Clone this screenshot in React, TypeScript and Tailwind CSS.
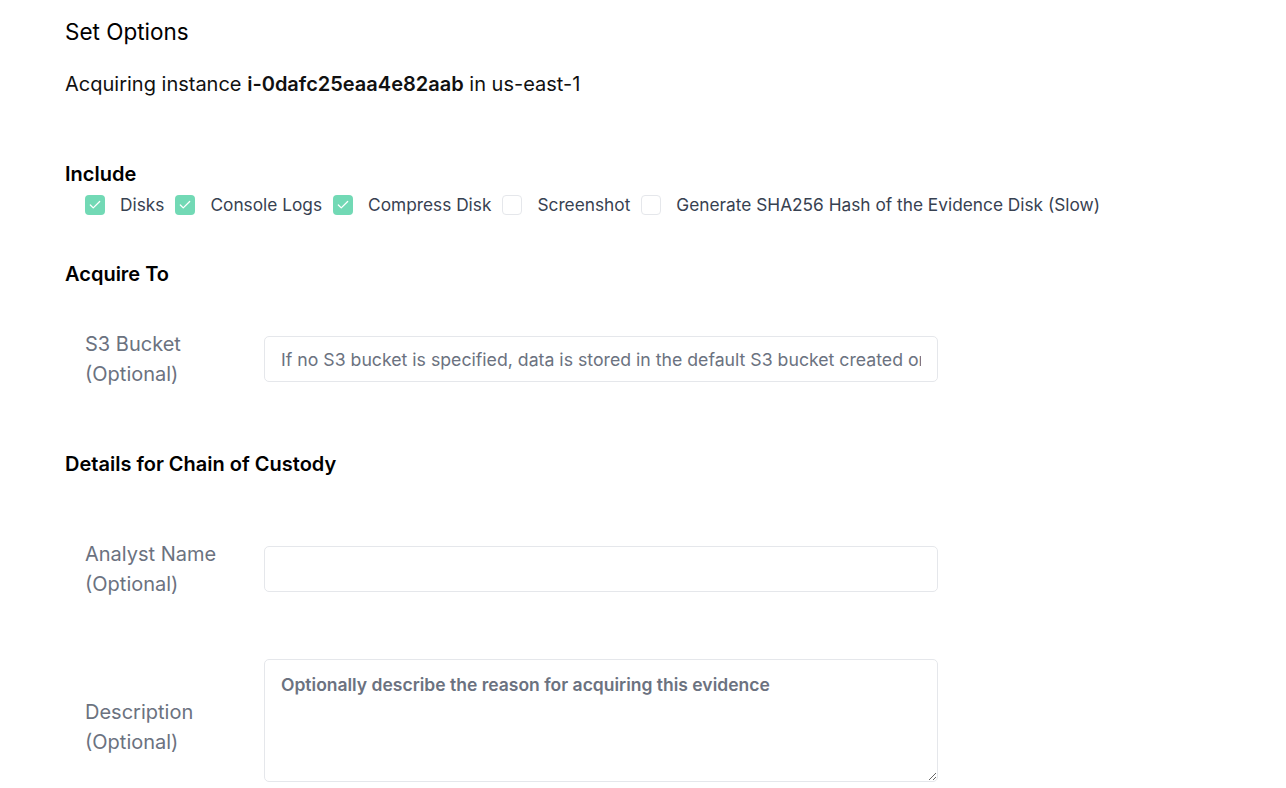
import { Check } from "lucide-react";

const font = { fontFamily: "Inter, 'Noto Sans', sans-serif" };

function Box({ checked }: { checked: boolean }) {
  return (
    <span
      className={
        checked
          ? "flex h-5 w-5 shrink-0 items-center justify-center rounded-[4px] bg-[#72d9b5]"
          : "flex h-5 w-5 shrink-0 items-center justify-center rounded-[4px] border border-[#e5e7eb] bg-white"
      }
    >
      {checked && <Check size={14} strokeWidth={2.2} className="text-white" />}
    </span>
  );
}

function Option({ label, checked }: { label: string; checked: boolean }) {
  return (
    <label className="flex items-center">
      <Box checked={checked} />
      <span className="ml-[15px] mr-[11px] text-[17.3px] text-[#374151]">{label}</span>
    </label>
  );
}

function FieldLabel({ name }: { name: string }) {
  return (
    <div className="w-[179px] shrink-0 text-[20px] leading-[30px] text-[#6b7280]">
      <div>{name}</div>
      <div>(Optional)</div>
    </div>
  );
}

export default function App() {
  return (
    <div className="min-h-screen bg-white px-[65px] pt-[18px] text-black" style={font}>
      <h2 className="text-[22.5px] leading-[28px]">Set Options</h2>
      <p className="mt-6 text-[20px] leading-[28px] text-[#111]">
        Acquiring instance <span className="font-semibold">i-0dafc25eaa4e82aab</span> in us-east-1
      </p>

      <h3 className="mt-[62px] text-[20px] font-semibold leading-[28px]">Include</h3>
      <div className="mt-[3px] flex h-7 items-center pl-5">
        <Option label="Disks" checked />
        <Option label="Console Logs" checked />
        <Option label="Compress Disk" checked />
        <Option label="Screenshot" checked={false} />
        <Option label="Generate SHA256 Hash of the Evidence Disk (Slow)" checked={false} />
      </div>

      <h3 className="mt-[41px] text-[20px] font-semibold leading-[28px]">Acquire To</h3>
      <div className="mt-[41px] flex items-center pl-5">
        <FieldLabel name="S3 Bucket" />
        <input
          className="h-[46px] w-[674px] rounded-[5px] border border-[#e5e7eb] px-4 text-[17.7px] text-[#374151] outline-none placeholder:text-[#6b7280]"
          placeholder="If no S3 bucket is specified, data is stored in the default S3 bucket created on first use"
        />
      </div>

      <h3 className="mt-[61px] text-[20px] font-semibold leading-[28px]">Details for Chain of Custody</h3>
      <div className="mt-[61px] flex items-center pl-5">
        <FieldLabel name="Analyst Name" />
        <input className="h-[46px] w-[674px] rounded-[5px] border border-[#e5e7eb] px-4 text-[17.7px] outline-none" />
      </div>

      <div className="mt-[60px] flex items-center pl-5">
        <div className="pt-3">
          <FieldLabel name="Description" />
        </div>
        <textarea
          className="h-[123px] w-[674px] rounded-[5px] border border-[#e5e7eb] px-4 pt-[12px] text-[17.5px] font-semibold outline-none placeholder:text-[#6b7280]"
          placeholder="Optionally describe the reason for acquiring this evidence"
        />
      </div>
    </div>
  );
}
